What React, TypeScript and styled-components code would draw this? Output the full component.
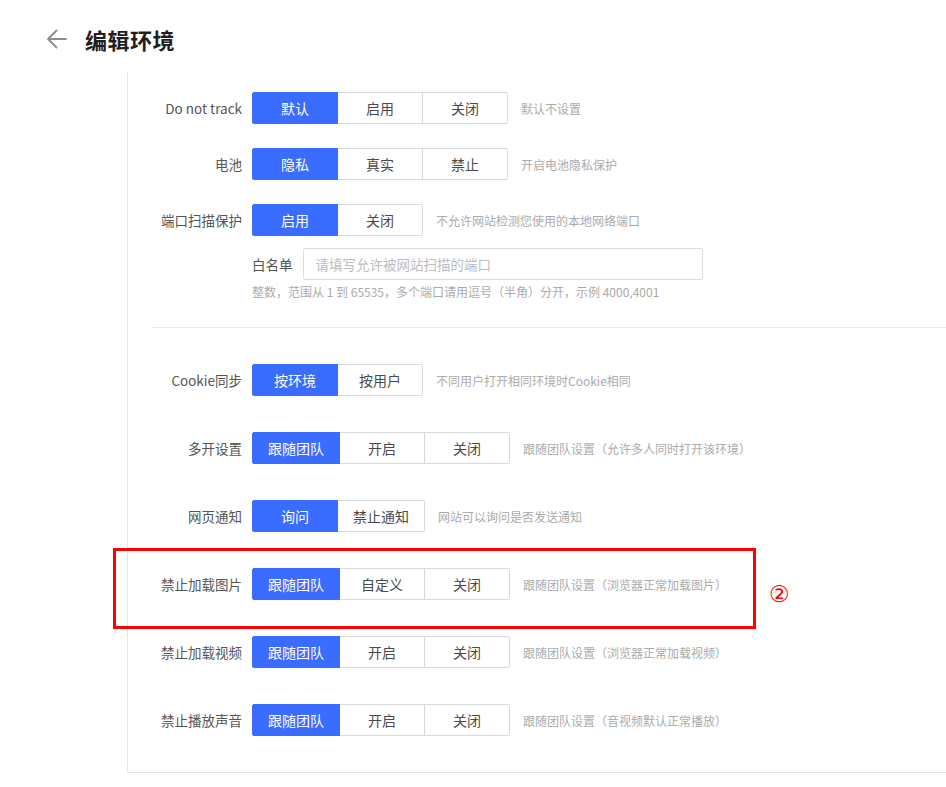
import React from "react";
import styled, { createGlobalStyle } from "styled-components";

const GlobalStyle = createGlobalStyle`
  html, body {
    margin: 0;
    padding: 0;
    background: #fff;
  }
  body {
    font-family: "Noto Sans CJK SC", "Open Sans", sans-serif;
    overflow: hidden;
  }
`;

type Setting = {
  label: string;
  options: string[];
  active: number;
  desc: string;
  marked?: boolean;
};

const topSettings: Setting[] = [
  { label: "Do not track", options: ["默认", "启用", "关闭"], active: 0, desc: "默认不设置" },
  { label: "电池", options: ["隐私", "真实", "禁止"], active: 0, desc: "开启电池隐私保护" },
];

const bottomSettings: Setting[] = [
  { label: "Cookie同步", options: ["按环境", "按用户"], active: 0, desc: "不同用户打开相同环境时Cookie相同" },
  { label: "多开设置", options: ["跟随团队", "开启", "关闭"], active: 0, desc: "跟随团队设置（允许多人同时打开该环境）" },
  { label: "网页通知", options: ["询问", "禁止通知"], active: 0, desc: "网站可以询问是否发送通知" },
  {
    label: "禁止加载图片",
    options: ["跟随团队", "自定义", "关闭"],
    active: 0,
    desc: "跟随团队设置（浏览器正常加载图片）",
    marked: true,
  },
  { label: "禁止加载视频", options: ["跟随团队", "开启", "关闭"], active: 0, desc: "跟随团队设置（浏览器正常加载视频）" },
  { label: "禁止播放声音", options: ["跟随团队", "开启", "关闭"], active: 0, desc: "跟随团队设置（音视频默认正常播放）" },
];

function BackArrow() {
  return (
    <svg width="22" height="22" viewBox="0 0 22 22" fill="none">
      <path d="M20 11H2.5M10.5 2.5L2 11l8.5 8.5" stroke="#8c8c8c" strokeWidth="1.8" strokeLinecap="round" strokeLinejoin="round" />
    </svg>
  );
}

function Segmented({ options, active }: { options: string[]; active: number }) {
  return (
    <Group>
      {options.map((o, i) => (
        <SegButton key={o} $active={i === active} $first={i === 0}>
          {o}
        </SegButton>
      ))}
    </Group>
  );
}

function SettingRow({ s, gap }: { s: Setting; gap: number }) {
  return (
    <Row $gap={gap}>
      <Label>{s.label}</Label>
      <Segmented options={s.options} active={s.active} />
      <Desc>{s.desc}</Desc>
      {s.marked && (
        <>
          <Mark />
          <MarkNum>②</MarkNum>
        </>
      )}
    </Row>
  );
}

export default function App() {
  return (
    <Page>
      <GlobalStyle />
      <Header>
        <BackButton>
          <BackArrow />
        </BackButton>
        <Title>编辑环境</Title>
      </Header>
      <Card>
        <Section $top={20}>
          {topSettings.map((s, i) => (
            <SettingRow key={s.label} s={s} gap={i === 0 ? 0 : 24} />
          ))}
          <Row $gap={24}>
            <Label>端口扫描保护</Label>
            <Segmented options={["启用", "关闭"]} active={0} />
            <Desc>不允许网站检测您使用的本地网络端口</Desc>
          </Row>
          <SubBlock>
            <SubRow>
              <SubLabel>白名单</SubLabel>
              <Input placeholder="请填写允许被网站扫描的端口" />
            </SubRow>
            <Hint>整数，范围从 1 到 65535，多个端口请用逗号（半角）分开，示例 4000,4001</Hint>
          </SubBlock>
        </Section>
        <Divider />
        <Section $top={36}>
          {bottomSettings.map((s, i) => (
            <SettingRow key={s.label} s={s} gap={i === 0 ? 0 : 36} />
          ))}
        </Section>
      </Card>
    </Page>
  );
}

const Page = styled.div`
  width: 946px;
  height: 787px;
  box-sizing: border-box;
  padding-left: 127px;
  position: relative;
`;

const Header = styled.div`
  display: flex;
  align-items: center;
  height: 72px;
  margin-left: -127px;
  padding-left: 46px;
  padding-top: 6px;
  box-sizing: border-box;
`;

const BackButton = styled.div`
  width: 22px;
  height: 22px;
  display: flex;
  margin-right: 17px;
  cursor: pointer;
`;

const Title = styled.h1`
  margin: 0;
  font-size: 22px;
  font-weight: 700;
  color: #1f1f1f;
  letter-spacing: 0.5px;
`;

const Card = styled.div`
  border-left: 1px solid #e6e6e6;
  border-bottom: 1px solid #e6e6e6;
  height: 701px;
  box-sizing: border-box;
  padding-left: 24px;
`;

const Section = styled.div<{ $top: number }>`
  padding-top: ${(p) => p.$top}px;
`;

const Row = styled.div<{ $gap: number }>`
  display: flex;
  align-items: center;
  height: 32px;
  margin-top: ${(p) => p.$gap}px;
  position: relative;
`;

const Label = styled.div`
  width: 90px;
  margin-right: 10px;
  text-align: right;
  font-size: 13.5px;
  color: #555;
  white-space: nowrap;
`;

const Group = styled.div`
  display: flex;
  height: 32px;
`;

const SegButton = styled.div<{ $active: boolean; $first: boolean }>`
  min-width: 86px;
  box-sizing: border-box;
  padding: 0 15px;
  display: flex;
  align-items: center;
  justify-content: center;
  font-size: 14px;
  border: 1px solid ${(p) => (p.$active ? "#3a6cff" : "#d9d9d9")};
  margin-left: ${(p) => (p.$first ? 0 : -1)}px;
  background: ${(p) => (p.$active ? "#3a6cff" : "#fff")};
  color: ${(p) => (p.$active ? "#fff" : "#4a4a4a")};
  position: relative;
  z-index: ${(p) => (p.$active ? 1 : 0)};
  &:first-child {
    border-radius: 2px 0 0 2px;
  }
  &:last-child {
    border-radius: 0 2px 2px 0;
  }
`;

const Desc = styled.div`
  margin-left: 13px;
  font-size: 12px;
  color: #ababab;
  white-space: nowrap;
`;

const SubBlock = styled.div`
  padding-left: 100px;
  margin-top: 12px;
`;

const SubRow = styled.div`
  display: flex;
  align-items: center;
`;

const SubLabel = styled.div`
  font-size: 13.5px;
  color: #555;
  margin-right: 10px;
`;

const Input = styled.input`
  width: 400px;
  height: 32px;
  box-sizing: border-box;
  border: 1px solid #dcdcdc;
  border-radius: 2px;
  padding: 0 12px;
  font-family: inherit;
  font-size: 13.5px;
  color: #333;
  outline: none;
  &::placeholder {
    color: #bdbdbd;
  }
`;

const Hint = styled.div`
  margin-top: 3px;
  font-size: 12px;
  line-height: 18px;
  color: #ababab;
`;

const Divider = styled.div`
  height: 1px;
  background: #ebebeb;
  margin-top: 26px;
`;

const Mark = styled.div`
  position: absolute;
  left: -39px;
  top: -20px;
  width: 643px;
  height: 81px;
  box-sizing: border-box;
  border: 3px solid #ff0000;
  pointer-events: none;
`;

const MarkNum = styled.div`
  position: absolute;
  left: 617px;
  top: 16px;
  font-family: "Liberation Serif", "DejaVu Serif", serif;
  font-size: 23px;
  line-height: 22px;
  color: #ff0000;
`;
